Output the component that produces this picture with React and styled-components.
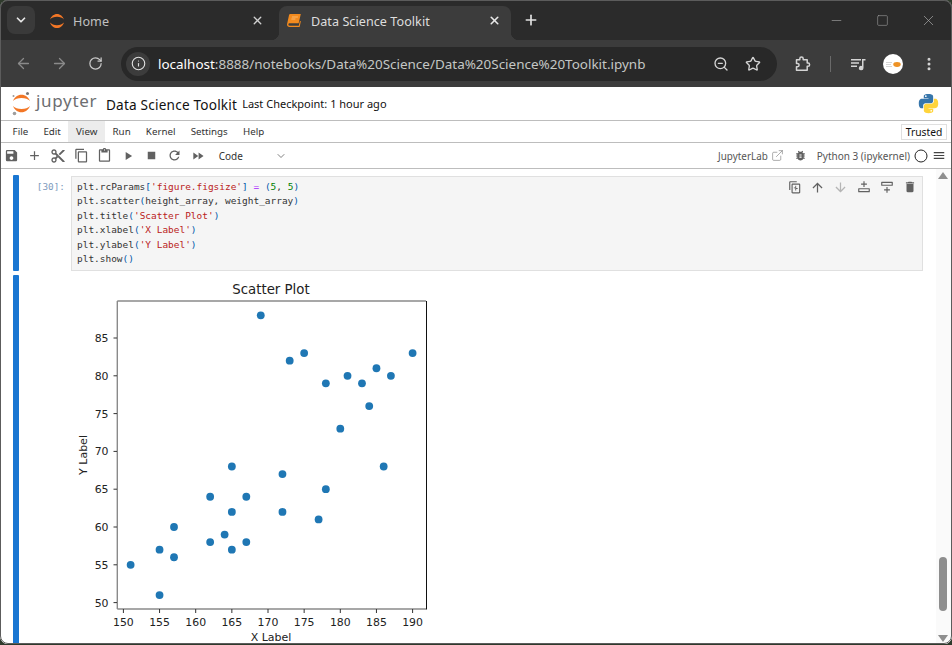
import React from 'react';
import styled, { createGlobalStyle } from 'styled-components';
import { ArrowLeft, ArrowRight, RotateCw, Info, Star, X, Plus, Minus, Square, EllipsisVertical, ZoomOut, ChevronDown, ExternalLink } from 'lucide-react';

const Global = createGlobalStyle`
  html, body { margin: 0; padding: 0; background: #2f3a2c; overflow: hidden; }
  #root { width: 952px; height: 645px; overflow: hidden; }
  * { box-sizing: border-box; }
`;

const Frame = styled.div`
  width: 952px; height: 644px; border-radius: 8px; overflow: hidden; position: relative;
  display: flex; flex-direction: column; background: #fff;
  outline: 1px solid #5c5c5c; outline-offset: -1px;
  font-family: "Noto Sans", "Open Sans", sans-serif;
`;
const TabStrip = styled.div`
  height: 40px; flex: none; display: flex; align-items: flex-start; padding: 6px 0 0 7px; background: #2b2b2b;
`;
const TabSwitcher = styled.div`
  width: 28px; height: 28px; border-radius: 8px; background: #3a3a3a; color: #e6e6e6;
  display: flex; align-items: center; justify-content: center;
`;
const Tab = styled.div`
  width: ${p => p.$w}px; height: 34px; flex: none; display: flex; align-items: center; position: relative;
  padding: 0 ${p => p.$pr}px 5px ${p => p.$pl}px; border-radius: 8px 8px 0 0;
  background: ${p => p.$active ? '#3c3c3c' : 'transparent'};
  color: ${p => p.$active ? '#dedede' : '#c0c0c0'};
  ${p => p.$active && `
    &::before, &::after { content: ''; position: absolute; bottom: 0; width: 8px; height: 8px; }
    &::before { left: -8px; background: radial-gradient(circle at 0 0, transparent 8px, #3c3c3c 8.5px); }
    &::after { right: -8px; background: radial-gradient(circle at 100% 0, transparent 8px, #3c3c3c 8.5px); }
  `}
`;
const TabTitle = styled.span`
  font-size: 12.6px; margin-left: ${p => p.$ml}px; white-space: nowrap; flex: 1; letter-spacing: 0.05px; position: relative; top: 1px;
`;
const NewTab = styled.div`
  margin: 6px 0 0 12px; width: 16px; height: 16px; color: #e2e2e2; display: flex; align-items: center; justify-content: center;
`;
const WindowControls = styled.div`
  margin: -6px 1px 0 auto; display: flex;
`;
const WindowButton = styled.div`
  width: 46px; height: 40px; color: #a8a8a8; display: flex; align-items: center; justify-content: center;
`;
const NavBar = styled.div`
  height: 47px; flex: none; background: #3c3c3c; display: flex; align-items: center; padding-left: 5px;
`;
const NavButton = styled.div`
  width: ${p => p.$w || 36}px; height: 36px; flex: none; display: flex; align-items: center; justify-content: center;
  color: ${p => p.$dim ? '#8a8a8a' : '#c8c8c8'};
`;
const AddressBar = styled.div`
  width: 656px; height: 34px; flex: none; margin-left: 8px; margin-right: 8px; border-radius: 17px; background: #282828;
  display: flex; align-items: center; padding-left: 5px;
`;
const SiteInfo = styled.div`
  width: 24px; height: 24px; border-radius: 50%; background: #3c3c3c; color: #e0e0e0; flex: none;
  display: flex; align-items: center; justify-content: center;
`;
const Url = styled.div`
  margin-left: 8px; font-size: 13.46px; color: #c4c7c5; white-space: nowrap; flex: 1;
  & b { color: #fff; font-weight: 400; }
`;
const AddressAction = styled.div`
  width: 32px; display: flex; align-items: center; justify-content: center; color: #d4d4d4; flex: none;
`;
const AddressEnd = styled.div` width: 8px; flex: none; `;
const NavDivider = styled.div`
  width: 1px; height: 16px; background: #6a6a6a; margin: 0 16px 0 9px; flex: none;
`;
const Avatar = styled.div`
  width: 20px; height: 20px; border-radius: 50%; background: #fff; flex: none; margin: 0 8px 0 14px;
  display: flex; align-items: center; justify-content: center;
`;
const Page = styled.div`
  flex: 1; min-height: 0; display: flex; flex-direction: column; background: #fff; border-top: 0;
`;
const Header = styled.div`
  height: 34px; flex: none; display: flex; align-items: center; padding: 0 13px 0 11px; border-bottom: 1px solid #bdbdbd;
`;
const Wordmark = styled.span`
  font-family: "Noto Sans", sans-serif; font-size: 17px; color: #6d6e71; margin: -6px 0 0 4px; width: 70px; letter-spacing: 0.7px; line-height: 24px;
`;
const NotebookTitle = styled.span`
  font-size: 13.6px; color: #111; white-space: nowrap; letter-spacing: 0.2px; position: relative; top: 1px;
`;
const Checkpoint = styled.span`
  font-size: 11px; color: #111; margin: -1px 0 0 5px; white-space: nowrap; flex: 1;
`;
const MenuBar = styled.div`
  height: 22px; flex: none; display: flex; align-items: stretch; padding: 0 5px 0 5px; border-bottom: 1px solid #bdbdbd;
`;
const MenuItem = styled.div`
  padding: 0 7.6px; display: flex; align-items: center; font-size: 9.75px; color: #333;
  background: ${p => p.$open ? '#ececec' : 'transparent'};
`;
const Trusted = styled.div`
  margin: 3px 0 2px auto; width: 46px; border: 1px solid #e0e0e0; font-size: 10.3px; color: #111;
  display: flex; align-items: center; justify-content: center;
`;
const Toolbar = styled.div`
  height: 26px; flex: none; display: flex; align-items: center; border-bottom: 1px solid #bdbdbd; padding-right: 6px; color: #616161;
`;
const Slot = styled.div`
  width: ${p => p.$w || 23.3}px; height: 24px; flex: none; display: flex; align-items: center; justify-content: center;
  color: ${p => p.$c || '#616161'};
`;
const CellType = styled.div`
  font-size: 10px; color: #333; margin-left: 9px; width: 56px;
`;
const ToolLabel = styled.span`
  font-size: ${p => p.$fs || 9.9}px; color: #555; white-space: nowrap;
`;
const ToolSpacer = styled.div` flex: 1; `;
const Workspace = styled.div`
  flex: 1; min-height: 0; display: flex; overflow: hidden;
`;
const Notebook = styled.div`
  flex: 1; min-width: 0; padding: 6px 13px 0 13px; display: flex; flex-direction: column; gap: 4px; overflow: hidden;
`;
const Cell = styled.div`
  display: flex; flex: ${p => p.$grow ? '1' : 'none'}; min-height: 0;
`;
const CellBar = styled.div`
  width: 6px; flex: none; background: #1976d2; border-radius: 1px;
`;
const Prompt = styled.div`
  width: 52px; flex: none; padding: 5px 6px 0 0; text-align: right; font: 9.4px/14.6px "DejaVu Sans Mono", monospace; color: #7d9bbd;
`;
const InputBox = styled.div`
  width: 852px; height: 95px; flex: none; margin-top: 1px; position: relative; background: #f5f5f5; border: 1px solid #e0e0e0; padding: 2.5px 5px;
  font: 9.46px/14.6px "DejaVu Sans Mono", monospace; color: #333;
`;
const CodeLine = styled.div` white-space: pre; `;
const Str = styled.span` color: #ba2121; `;
const Num = styled.span` color: #008000; `;
const Op = styled.span` color: #aa22ff; `;
const Br = styled.span` color: #0055aa; `;
const CellTools = styled.div`
  position: absolute; top: 0; right: 1px; display: flex; height: 20px; align-items: center;
`;
const FigureSvg = styled.svg`
  display: block; flex: none; width: 354px; height: 366px; margin: 3px 0 0 59px;
  font-family: "DejaVu Sans", sans-serif;
`;
const TickText = styled.text` font-size: 10.9px; fill: #222; `;
const ScrollBar = styled.div`
  width: 16px; flex: none; margin-right: 0; background: #fafafa; display: flex; flex-direction: column; align-items: center; padding: 3px 3px 2px 0;
`;
const ScrollTrack = styled.div` flex: 1; width: 8px; position: relative; `;
const ScrollThumb = styled.div`
  position: absolute; left: 0; right: 0; top: 378px; height: 54px; background: #8e8e8e; border-radius: 4px;
`;
const ArrowShape = styled.div`
  width: 0; height: 0; flex: none; border-left: 5px solid transparent; border-right: 5px solid transparent;
  ${p => p.$down ? 'border-top: 7px solid #8e8e8e;' : 'border-bottom: 7px solid #8e8e8e;'}
`;

const Mat = ({ d, size = 16 }) => <svg width={size} height={size} viewBox="0 0 24 24" fill="currentColor"><path d={d} /></svg>;
const I = {
  save: 'M17 3H5a2 2 0 0 0-2 2v14a2 2 0 0 0 2 2h14c1.1 0 2-.9 2-2V7l-4-4zm-5 16c-1.66 0-3-1.34-3-3s1.34-3 3-3 3 1.34 3 3-1.34 3-3 3zm3-10H5V5h10v4z',
  add: 'M19 13h-6v6h-2v-6H5v-2h6V5h2v6h6v2z',
  cut: 'M9.64 7.64c.23-.5.36-1.05.36-1.64 0-2.21-1.79-4-4-4S2 3.79 2 6s1.79 4 4 4c.59 0 1.14-.13 1.64-.36L10 12l-2.36 2.36C7.14 14.13 6.59 14 6 14c-2.21 0-4 1.79-4 4s1.79 4 4 4 4-1.79 4-4c0-.59-.13-1.14-.36-1.64L12 14l7 7h3v-1L9.64 7.64zM6 8c-1.1 0-2-.89-2-2s.9-2 2-2 2 .89 2 2-.9 2-2 2zm0 12c-1.1 0-2-.89-2-2s.9-2 2-2 2 .89 2 2-.9 2-2 2zm6-7.5c-.28 0-.5-.22-.5-.5s.22-.5.5-.5.5.22.5.5-.22.5-.5.5zM19 3l-6 6 2 2 7-7V3z',
  copy: 'M16 1H4c-1.1 0-2 .9-2 2v14h2V3h12V1zm3 4H8c-1.1 0-2 .9-2 2v14c0 1.1.9 2 2 2h11c1.1 0 2-.9 2-2V7c0-1.1-.9-2-2-2zm0 16H8V7h11v14z',
  paste: 'M19 2h-4.18C14.4.84 13.3 0 12 0c-1.3 0-2.4.84-2.82 2H5c-1.1 0-2 .9-2 2v16c0 1.1.9 2 2 2h14c1.1 0 2-.9 2-2V4c0-1.1-.9-2-2-2zm-7 0c.55 0 1 .45 1 1s-.45 1-1 1-1-.45-1-1 .45-1 1-1zm7 18H5V4h2v3h10V4h2v16z',
  run: 'M8 5v14l11-7z',
  stop: 'M6 6h12v12H6z',
  restart: 'M17.65 6.35C16.2 4.9 14.21 4 12 4c-4.42 0-7.99 3.58-7.99 8s3.57 8 7.99 8c3.73 0 6.84-2.55 7.73-6h-2.08c-.82 2.33-3.04 4-5.65 4-3.31 0-6-2.69-6-6s2.69-6 6-6c1.66 0 3.14.69 4.22 1.78L13 11h7V4l-2.35 2.35z',
  ff: 'M4 18l8.5-6L4 6v12zm9-12v12l8.5-6L13 6z',
  up: 'M4 12l1.41 1.41L11 7.83V20h2V7.83l5.58 5.59L20 12l-8-8-8 8z',
  down: 'M20 12l-1.41-1.41L13 16.17V4h-2v12.17l-5.58-5.59L4 12l8 8 8-8z',
  del: 'M6 19c0 1.1.9 2 2 2h8c1.1 0 2-.9 2-2V7H6v12zM19 4h-3.5l-1-1h-5l-1 1H5v2h14V4z',
  menu: 'M3 18h18v-2H3v2zm0-5h18v-2H3v2zm0-7v2h18V6H3z',
  bug: 'M20 8h-2.81c-.45-.78-1.07-1.45-1.82-1.96L17 4.41 15.59 3l-2.17 2.17C12.96 5.06 12.49 5 12 5c-.49 0-.96.06-1.41.17L8.41 3 7 4.41l1.62 1.63C7.88 6.55 7.26 7.22 6.81 8H4v2h2.09c-.05.33-.09.66-.09 1v1H4v2h2v1c0 .34.04.67.09 1H4v2h2.81c1.04 1.79 2.97 3 5.19 3s4.15-1.21 5.19-3H20v-2h-2.09c.05-.33.09-.66.09-1v-1h2v-2h-2v-1c0-.34-.04-.67-.09-1H20V8zm-6 8h-4v-2h4v2zm0-4h-4v-2h4v2z',
  dup: 'M15 2H4c-1.1 0-2 .9-2 2v13h2V4h11V2zm4 4H8c-1.1 0-2 .9-2 2v13c0 1.1.9 2 2 2h11c1.1 0 2-.9 2-2V8c0-1.1-.9-2-2-2zm0 15H8V8h11v13zm-5-11h-1.5v2.75H10v1.5h2.5V18H14v-2.75h2.5v-1.5H14z',
  insAbove: 'M3 14h18c.6 0 1 .4 1 1v5c0 .6-.4 1-1 1H3c-.6 0-1-.4-1-1v-5c0-.6.4-1 1-1zm1 2v3h16v-3H4zM11 12V8H7V6h4V2h2v4h4v2h-4v4z',
  insBelow: 'M3 3h18c.6 0 1 .4 1 1v5c0 .6-.4 1-1 1H3c-.6 0-1-.4-1-1V4c0-.6.4-1 1-1zm1 2v3h16V5H4zM11 12v4H7v2h4v4h2v-4h4v-2h-4v-4z',
};

const Arcs = ({ size = 16, color = '#f37726' }) => (
  <svg width={size} height={size} viewBox="0 0 20 20" fill={color}>
    <path d="M10 15.2c-3.7 0-7-1.3-8.7-3.3C2.6 15.9 6 18.9 10 18.9s7.4-3 8.7-7C17 13.9 13.700 15.200 10 15.200z" />
    <path d="M10 4.800c3.700 0 7 1.300 8.700 3.300C17.400 4.100 14 1.100 10 1.100S2.600 4.100 1.300 8.100C3 6.100 6.300 4.800 10 4.800z" />
  </svg>
);
const JupyterMark = () => (
  <svg width="21" height="25" viewBox="0 0 21 25" style={{ flex: 'none' }}>
    <path fill="#f37726" d="M10.500 18c-3.600 0-6.800-1.200-8.500-3 1.300 3.700 4.600 6.300 8.500 6.300s7.200-2.600 8.500-6.300c-1.700 1.800-4.900 3-8.500 3zM10.500 7c3.600 0 6.800 1.200 8.500 3-1.300-3.700-4.600-6.300-8.500-6.300S3.300 6.300 2 10c1.700-1.800 4.900-3 8.500-3z" />
    <circle cx="16.500" cy="2.500" r="1.500" fill="#767677" />
    <circle cx="2.500" cy="5" r="1" fill="#989798" />
    <circle cx="3.500" cy="22.500" r="1.800" fill="#9e9e9e" />
  </svg>
);
const BookIcon = () => (
  <svg width="15" height="15" viewBox="0 0 15 15">
    <path fill="#f28a1e" d="M3.500 1h10.300L11.700 10.300H2.700c-.9 0-1.300.5-1.300 1.200 0 .8.5 1.200 1.300 1.200h9.100l1-4.500 1.100-.2L12.600 14H2.500C1 14 0 13 0 11.600 0 11.200 0 11 .2 10.500L2 2.300C2.200 1.500 2.700 1 3.500 1z" />
    <path fill="#ffd9a8" d="M5 3.500h6l-.2 1H4.800zM4.500 5.500h4l-.2 1h-4z" opacity=".6" />
  </svg>
);
const PuzzleIcon = () => (
  <svg width="18" height="18" viewBox="0 0 18 18" fill="none" stroke="#d4d4d4" strokeWidth="1.500" strokeLinejoin="round">
    <path d="M2.500 4.800h3.300V3.700a1.700 1.700 0 0 1 3.400 0v1.100h4v3.300h.8a1.600 1.600 0 0 1 0 3.200h-.8v4H2.500v-3.600h1a1.600 1.600 0 0 0 0-3.200h-1z" />
  </svg>
);
const QueueIcon = () => (
  <svg width="18" height="18" viewBox="0 0 18 18" fill="#d4d4d4">
    <path d="M2 4h10v1.400H2zM2 7.300h8v1.400H2zM2 10.600h6V12H2z" />
    <path d="M13 4h3.500v1.500h-2V13a2.300 2.300 0 1 1-1.500-2.100z" />
  </svg>
);
const AvatarArt = () => (
  <svg width="18" height="18" viewBox="0 0 18 18">
    <path d="M2 7h6v.8H2zM2 9h5v.8H2zM2 11h6v.8H2z" fill="#c8c8c8" />
    <ellipse cx="13" cy="9.500" rx="3.700" ry="2.400" fill="#ee9326" />
  </svg>
);
const PythonLogo = () => (
  <svg width="21" height="21" viewBox="0 0 24 24" style={{ flex: 'none', marginTop: '-1px' }}>
    <path fill="#3776ab" d="M11.900 1C6.300 1 6.600 3.400 6.600 3.400v2.500h5.400v.8H4.500S.9 6.300.9 12s3.100 5.500 3.100 5.500h1.900v-2.700s-.1-3.100 3.100-3.100h5.300s3-.1 3-2.900V3.900S17.800 1 11.900 1zM8.900 2.700c.5 0 1 .4 1 1s-.5 1-1 1-1-.5-1-1 .4-1 1-1z" />
    <path fill="#ffd43b" d="M12.100 23c5.600 0 5.300-2.400 5.300-2.400v-2.500H12v-.8h7.500s3.600.4 3.600-5.300-3.100-5.500-3.100-5.500h-1.900v2.700s.1 3.100-3.100 3.100H9.700s-3 -.1-3 2.900v4.900S6.200 23 12.100 23zm3-1.700c-.5 0-1-.4-1-1s.5-1 1-1 1 .5 1 1-.4 1-1 1z" />
  </svg>
);

const xScale = v => 123.4 + (v - 150) * 7.23;
const yScale = v => 602.6 - (v - 50) * 7.56;
const points = [[151,55],[155,57],[155,51],[157,60],[157,56],[162,64],[162,58],[164,59],[165,68],[165,62],[165,57],[167,64],[167,58],[169,88],[172,67],[172,62],[173,82],[175,83],[177,61],[178,79],[178,65],[180,73],[181,80],[183,79],[184,76],[185,81],[186,68],[187,80],[190,83]];
const xTicks = [150,155,160,165,170,175,180,185,190];
const yTicks = [50,55,60,65,70,75,80,85];

const ScatterPlot = () => (
  <FigureSvg viewBox="78 278 354 366">
    <text x="271" y="294" textAnchor="middle" fontSize="13.300" fill="#222">Scatter Plot</text>
    <g stroke="#8a8a8a" strokeWidth="1.400">
      <line x1="117.300" y1="301" x2="426" y2="301" />
      <line x1="117.300" y1="301" x2="117.300" y2="609" />
      <line x1="117.300" y1="609" x2="426" y2="609" />
    </g>
    <line x1="426.500" y1="301" x2="426.500" y2="609.500" stroke="#111" strokeWidth="1" />
    {xTicks.map(t => (
      <g key={t}>
        <line x1={xScale(t)} x2={xScale(t)} y1="609" y2="613" stroke="#333" strokeWidth="1" />
        <TickText x={xScale(t)} y="625.500" textAnchor="middle">{t}</TickText>
      </g>
    ))}
    {yTicks.map(t => (
      <g key={t}>
        <line x1="113.500" x2="117" y1={yScale(t)} y2={yScale(t)} stroke="#333" strokeWidth="1" />
        <TickText x="108.500" y={yScale(t) + 4} textAnchor="end">{t}</TickText>
      </g>
    ))}
    {points.map(([x, y]) => <circle key={`${x}-${y}`} cx={xScale(x)} cy={yScale(y)} r="3.900" fill="#1f77b4" />)}
    <text x="271" y="641" textAnchor="middle" fontSize="11" fill="#222">X Label</text>
    <text transform="translate(87 455) rotate(-90)" textAnchor="middle" fontSize="11" fill="#222">Y Label</text>
  </FigureSvg>
);

export default function App() {
  return (
    <Frame>
      <Global />
      <TabStrip>
        <TabSwitcher><ChevronDown size={14} strokeWidth={3} /></TabSwitcher>
        <Tab $w={244} $pl={14} $pr={15}>
          <Arcs />
          <TabTitle $ml={8}>Home</TabTitle>
          <X size={13} strokeWidth={2.500} color="#d0d0d0" />
        </Tab>
        <Tab $active $w={232} $pl={8} $pr={10}>
          <BookIcon />
          <TabTitle $ml={9}>Data Science Toolkit</TabTitle>
          <X size={13} strokeWidth={3} color="#e8e8e8" />
        </Tab>
        <NewTab><Plus size={16} strokeWidth={2.500} /></NewTab>
        <WindowControls>
          <WindowButton><Minus size={15} strokeWidth={1} /></WindowButton>
          <WindowButton><Square size={13} strokeWidth={1} /></WindowButton>
          <WindowButton><X size={17} strokeWidth={1} /></WindowButton>
        </WindowControls>
      </TabStrip>
      <NavBar>
        <NavButton $dim><ArrowLeft size={17} strokeWidth={1.800} /></NavButton>
        <NavButton $dim><ArrowRight size={17} strokeWidth={1.800} /></NavButton>
        <NavButton><RotateCw size={15} strokeWidth={2} /></NavButton>
        <AddressBar>
          <SiteInfo><Info size={15} strokeWidth={1.800} /></SiteInfo>
          <Url><b>localhost</b>:8888/notebooks/Data%20Science/Data%20Science%20Toolkit.ipynb</Url>
          <AddressAction><ZoomOut size={16} strokeWidth={2} /></AddressAction>
          <AddressAction><Star size={16} strokeWidth={2} /></AddressAction>
          <AddressEnd />
        </AddressBar>
        <NavButton><PuzzleIcon /></NavButton>
        <NavDivider />
        <NavButton $w={22}><QueueIcon /></NavButton>
        <Avatar><AvatarArt /></Avatar>
        <NavButton><EllipsisVertical size={16} strokeWidth={2.500} color="#d4d4d4" /></NavButton>
      </NavBar>
      <Page>
        <Header>
          <JupyterMark />
          <Wordmark>jupyter</Wordmark>
          <NotebookTitle>Data Science Toolkit</NotebookTitle>
          <Checkpoint>Last Checkpoint: 1 hour ago</Checkpoint>
          <PythonLogo />
        </Header>
        <MenuBar>
          <MenuItem>File</MenuItem>
          <MenuItem>Edit</MenuItem>
          <MenuItem $open>View</MenuItem>
          <MenuItem>Run</MenuItem>
          <MenuItem>Kernel</MenuItem>
          <MenuItem>Settings</MenuItem>
          <MenuItem>Help</MenuItem>
          <Trusted>Trusted</Trusted>
        </MenuBar>
        <Toolbar>
          <Slot><Mat d={I.save} size={15} /></Slot>
          <Slot><Mat d={I.add} size={15} /></Slot>
          <Slot><Mat d={I.cut} /></Slot>
          <Slot><Mat d={I.copy} size={15} /></Slot>
          <Slot><Mat d={I.paste} size={15} /></Slot>
          <Slot><Mat d={I.run} size={14} /></Slot>
          <Slot><Mat d={I.stop} size={15} /></Slot>
          <Slot><Mat d={I.restart} size={15} /></Slot>
          <Slot><Mat d={I.ff} size={14} /></Slot>
          <CellType>Code</CellType>
          <ChevronDown size={12} strokeWidth={1.500} color="#555" />
          <ToolSpacer />
          <ToolLabel>JupyterLab</ToolLabel>
          <ExternalLink size={13} strokeWidth={1} color="#666" style={{ marginLeft: 3 }} />
          <Slot $w={33}><Mat d={I.bug} size={13} /></Slot>
          <ToolLabel $fs={10}>Python 3 (ipykernel)</ToolLabel>
          <Slot $w={22} $c="#222"><svg width="14" height="14" viewBox="0 0 14 14" fill="none" stroke="currentColor" strokeWidth="1"><circle cx="7" cy="7" r="6" /></svg></Slot>
          <Slot $w={14} $c="#444"><Mat d={I.menu} size={15} /></Slot>
        </Toolbar>
        <Workspace>
          <Notebook>
            <Cell>
              <CellBar />
              <Prompt>[30]:</Prompt>
              <InputBox>
                <CodeLine>plt.rcParams<Br>[</Br><Str>'figure.figsize'</Str><Br>]</Br> <Op>=</Op> <Br>(</Br><Num>5</Num>, <Num>5</Num><Br>)</Br></CodeLine>
                <CodeLine>plt.scatter<Br>(</Br>height_array, weight_array<Br>)</Br></CodeLine>
                <CodeLine>plt.title<Br>(</Br><Str>'Scatter Plot'</Str><Br>)</Br></CodeLine>
                <CodeLine>plt.xlabel<Br>(</Br><Str>'X Label'</Str><Br>)</Br></CodeLine>
                <CodeLine>plt.ylabel<Br>(</Br><Str>'Y Label'</Str><Br>)</Br></CodeLine>
                <CodeLine>plt.show<Br>()</Br></CodeLine>
                <CellTools>
                  <Slot $w={23}><Mat d={I.dup} size={14} /></Slot>
                  <Slot $w={23}><Mat d={I.up} size={15} /></Slot>
                  <Slot $w={23} $c="#b5b5b5"><Mat d={I.down} size={15} /></Slot>
                  <Slot $w={23}><Mat d={I.insAbove} size={14} /></Slot>
                  <Slot $w={23}><Mat d={I.insBelow} size={14} /></Slot>
                  <Slot $w={23}><Mat d={I.del} size={14} /></Slot>
                </CellTools>
              </InputBox>
            </Cell>
            <Cell $grow>
              <CellBar />
              <ScatterPlot />
            </Cell>
          </Notebook>
          <ScrollBar>
            <ArrowShape />
            <ScrollTrack><ScrollThumb /></ScrollTrack>
            <ArrowShape $down />
          </ScrollBar>
        </Workspace>
      </Page>
    </Frame>
  );
}
